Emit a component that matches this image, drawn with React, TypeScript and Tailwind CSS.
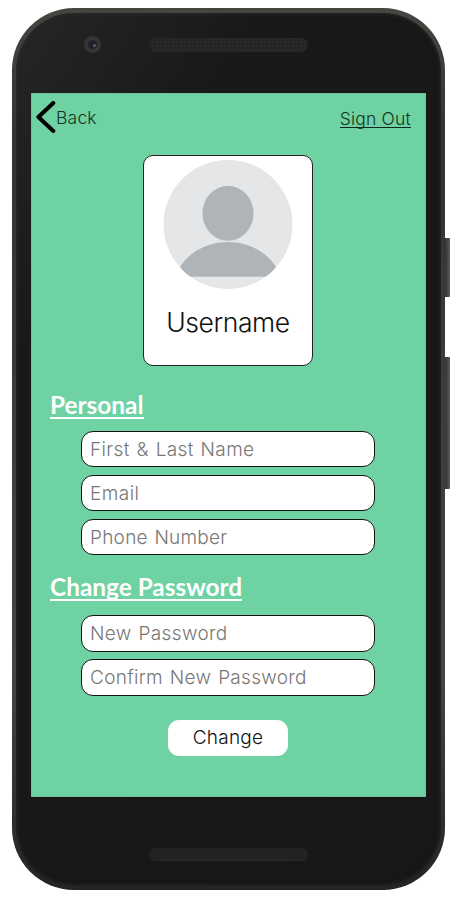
import React from "react";

const uiFont = "font-['Inter','Liberation_Sans',sans-serif] font-light";

function Heading({ children, className }: { children: string; className: string }) {
  return (
    <h2
      className={`h-[28px] w-fit whitespace-nowrap border-b-2 border-white font-['Lato','Liberation_Sans',sans-serif] text-[24.4px] font-bold leading-[28px] text-white ${className}`}
    >
      {children}
    </h2>
  );
}

function Field({ label, className }: { label: string; className: string }) {
  return (
    <div className={`flex w-[294px] items-center rounded-[12px] border border-[#111] bg-white pl-[8px] pt-px ${className}`}>
      <span className="whitespace-nowrap text-[19px] leading-6 text-[#777]">{label}</span>
    </div>
  );
}

function Avatar() {
  return (
    <svg width="130" height="130" viewBox="0 0 130 130" className="mt-1 block">
      <defs>
        <clipPath id="avatar-disc">
          <circle cx="65" cy="64.5" r="64.5" />
        </clipPath>
        <clipPath id="avatar-body">
          <rect width="130" height="116.7" />
        </clipPath>
      </defs>
      <circle cx="65" cy="64.5" r="64.5" fill="#e4e6e8" />
      <g clipPath="url(#avatar-disc)" fill="#aeb4b8">
        <ellipse cx="65" cy="53.3" rx="25.5" ry="27.5" />
        <ellipse cx="65" cy="127" rx="53.5" ry="45" clipPath="url(#avatar-body)" />
      </g>
    </svg>
  );
}

function Grille({ className }: { className: string }) {
  return (
    <div
      className={`w-[159px] rounded-full bg-[#282828] bg-[radial-gradient(#202020_0.6px,transparent_1px)] bg-[size:4px_4px] ${className}`}
    />
  );
}

export default function App() {
  return (
    <div className={`h-[902px] w-[458px] overflow-hidden bg-white pl-[12px] pt-[8px] ${uiFont}`}>
      <div className="relative h-[882px] w-[433px] rounded-[62px] bg-[linear-gradient(to_bottom,#44463f,#333431_15%,#454543_75%,#252422)] pl-1 pt-[5px]">
        <div className="absolute left-[433px] top-[230px] h-[59px] w-[5px] rounded-r-[1px] bg-gradient-to-r from-[#343234] to-[#5b595b]" />
        <div className="absolute left-[433px] top-[349px] h-[132px] w-[5px] rounded-r-[1px] bg-gradient-to-r from-[#343234] to-[#5b595b]" />
        <div className="h-[873px] w-[425px] rounded-[58px] bg-[linear-gradient(125deg,#262626,#181818_25%,#171717)] pl-[15px] shadow-[inset_0_0_4px_#303030]">
          <div className="flex h-[80px] pl-[53px] pt-[23px]">
            <div className="mr-[48px] flex h-[17px] w-[17px] items-center justify-center rounded-full bg-[#353535]">
              <div className="flex h-[9px] w-[9px] items-center justify-center rounded-full bg-[#20202a]">
                <div className="ml-[3px] mt-[2px] h-[3px] w-[3px] rounded-full bg-[#5e5a62]" />
              </div>
            </div>
            <Grille className="mt-[2px] h-[14px]" />
          </div>

          <main className="flex h-[704px] w-[395px] flex-col bg-[#6fd2a2] shadow-[inset_0_0_1px_#25543e]">
            <header className="flex h-[62px] justify-between pl-[5px] pr-[15px] pt-[8px]">
              <div className="flex items-start">
                <svg width="20" height="32" viewBox="0 0 20 32">
                  <path d="M17.3 2 2.4 16 17.3 30" fill="none" stroke="#000" strokeWidth="4" strokeLinecap="round" strokeLinejoin="round" />
                </svg>
                <span className="mt-[5px] text-[17.5px] leading-6 tracking-[0.2px] text-[#173226]">Back</span>
              </div>
              <span className="mt-[7px] h-[20px] border-b border-[#10271c] text-[17.5px] leading-[22px] tracking-[0.2px] text-[#173226]">Sign Out</span>
            </header>

            <section className="ml-[112px] flex h-[211px] w-[170px] flex-col items-center rounded-[10px] border border-[#222] bg-white">
              <Avatar />
              <span className="mt-[16px] text-[26.5px] leading-8 tracking-[-0.45px] text-[#111]">Username</span>
            </section>

            <Heading className="ml-[19px] mt-[25px]">Personal</Heading>
            <div className="ml-[50px] mt-[12px] flex flex-col gap-[8px]">
              <Field label="First & Last Name" className="h-[36px] tracking-[0.35px] [word-spacing:1.2px]" />
              <Field label="Email" className="h-[36px] tracking-[0.45px]" />
              <Field label="Phone Number" className="h-[36px] tracking-[0.25px] [word-spacing:1px]" />
            </div>

            <Heading className="ml-[19px] mt-[18px]">Change Password</Heading>
            <div className="ml-[50px] mt-[14px] flex flex-col gap-[7px]">
              <Field label="New Password" className="h-[37px] tracking-[0.35px] [word-spacing:1.2px]" />
              <Field label="Confirm New Password" className="h-[37px] tracking-[0.3px] [word-spacing:1.2px]" />
            </div>

            <button className="ml-[137px] mt-[24px] h-[36px] w-[120px] rounded-[11px] bg-white text-[19px] leading-6 tracking-[0.25px] text-[#111]">
              Change
            </button>
          </main>

          <Grille className="ml-[118px] mt-[51px] h-[13px] border-b border-[#303030] opacity-75" />
        </div>
      </div>
    </div>
  );
}
